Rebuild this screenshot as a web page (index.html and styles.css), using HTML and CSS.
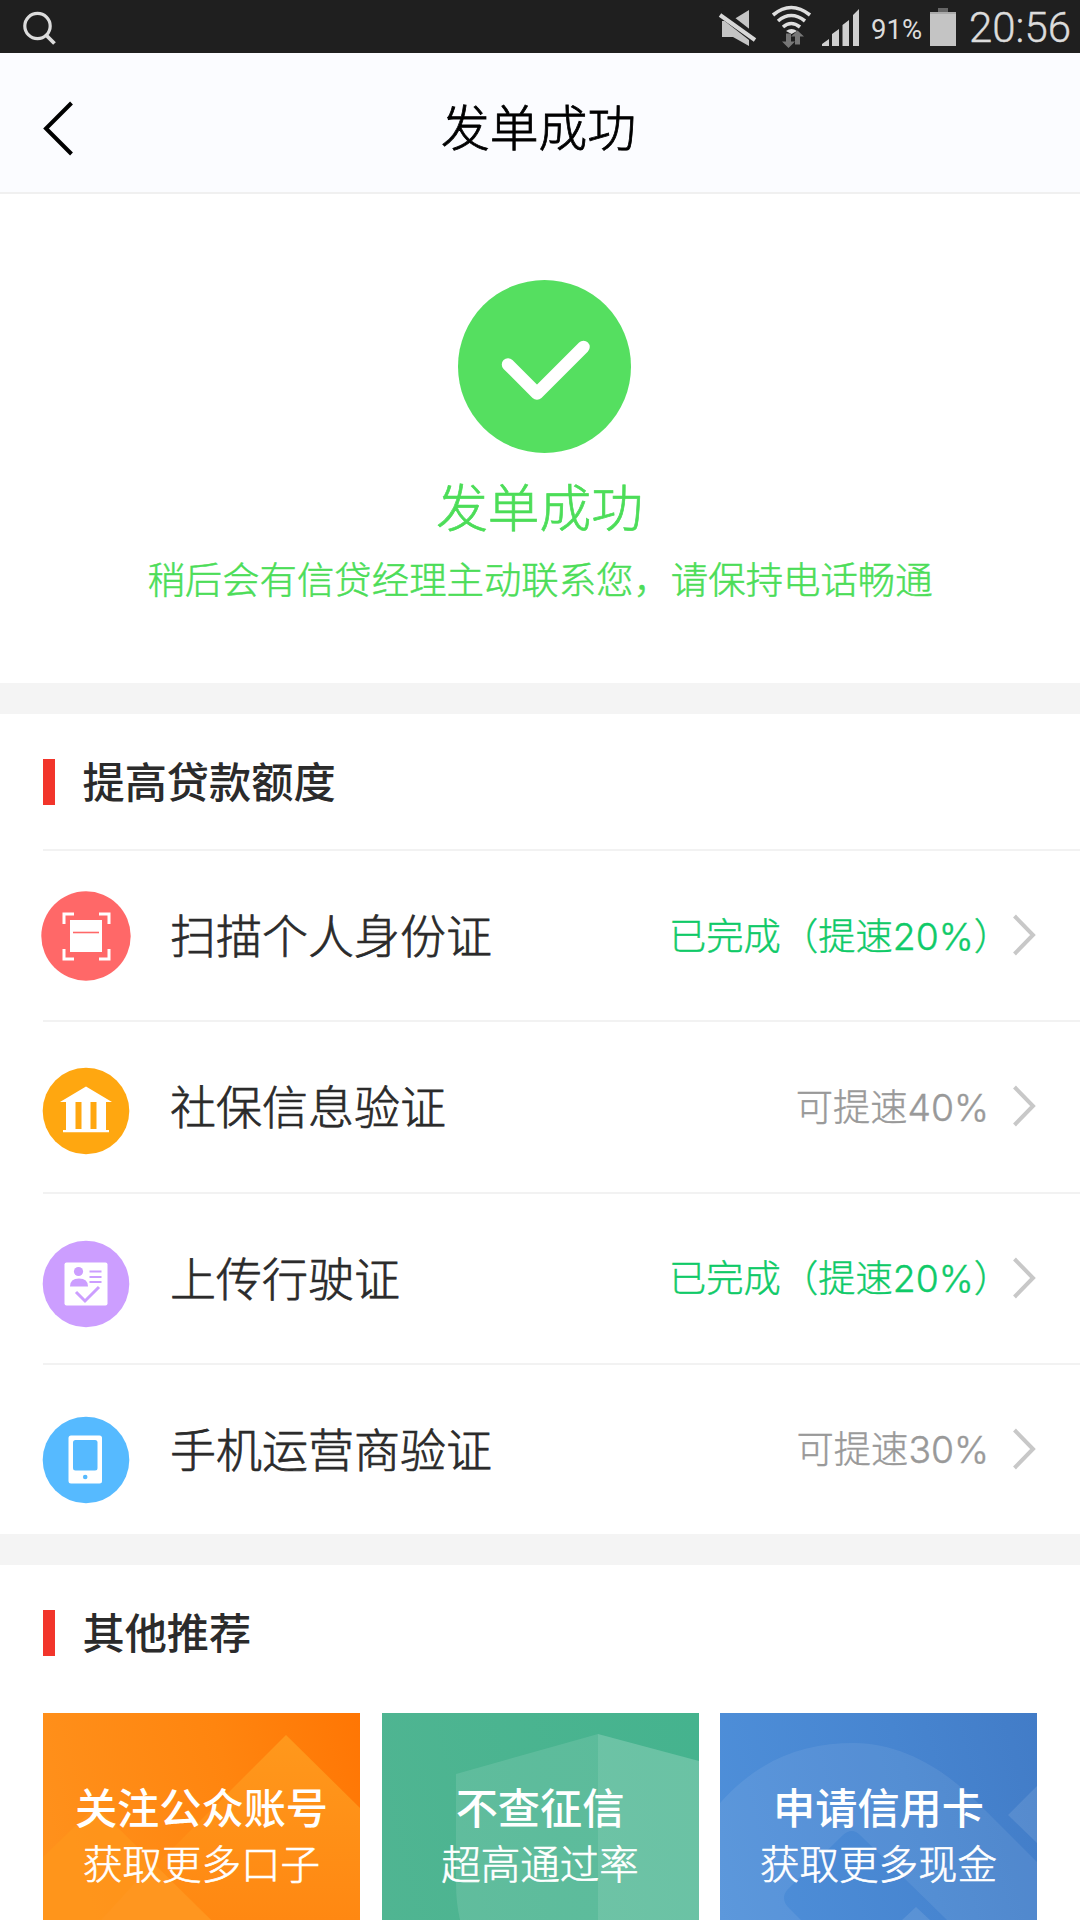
FILE: index.html
```html
<!DOCTYPE html>
<html lang="zh-CN">
<head>
<meta charset="utf-8">
<title>发单成功</title>
<link rel="stylesheet" href="styles.css">
</head>
<body>
<div class="screen">
  <div class="statusbar">
    <svg class="status-search" width="36" height="36" viewBox="0 0 36 36"><circle cx="17.500" cy="15" r="12.700" fill="none" stroke="#dcdcdc" stroke-width="3.200"/><path d="M26 24l8.500 8.500" stroke="#dcdcdc" stroke-width="3.800"/></svg>
    <svg class="status-icons" width="150" height="53" viewBox="0 0 150 53">
      <path d="M6 21h9L33 10v36L17 37H6z" fill="#c4c4c4"/>
      <path d="M3 11l36 28" stroke="#1f1f1f" stroke-width="9"/>
      <path d="M4 15l35 25" stroke="#d8d8d8" stroke-width="4"/>
      <g fill="none" stroke="#dedede" stroke-width="3.600"><path d="M57 15q18-15 37 0M62 21q13-11 27 0M67 27q8-7 17 0"/></g>
      <path d="M70 31q5.500-4 11 0l-5.500 3z" fill="#dedede"/>
      <path d="M70 33.500h5v8h4L72.500 48 66 41.500h4zM79 44.500v-8h-4l6.500-6 6.500 6h-4v8z" fill="#777"/>
      <path d="M106 46v-2l7-5v7zM116 46V34l7-5v17zM126.500 46V25l6.500-5v26zM137 46V15l6-6v37z" fill="#cfcfcf"/>
    </svg>
    <span class="percent">91%</span>
    <svg class="battery" width="26" height="38" viewBox="0 0 26 38"><path d="M8 0h10v4H8z" fill="#666"/><path d="M0 4h26v4H0z" fill="#aaa"/><path d="M0 6h26v32H0z" fill="#c4c4c4"/></svg>
    <span class="clock">20:56</span>
  </div>

  <header class="header">
    <svg class="back" width="34" height="56" viewBox="0 0 34 56"><path d="M29.500 2L4 27.500 29.500 53" fill="none" stroke="#000" stroke-width="4"/></svg>
    <h1>发单成功</h1>
  </header>

  <section class="result">
    <svg class="tick" width="173" height="173" viewBox="0 0 173 173"><circle cx="86.500" cy="86.500" r="86.500" fill="#55df60"/><path d="M50 84.500l29 29L125.500 67" fill="none" stroke="#fff" stroke-width="12.500" stroke-linecap="round" stroke-linejoin="round"/></svg>
    <h2>发单成功</h2>
    <p>稍后会有信贷经理主动联系您，请保持电话畅通</p>
  </section>

  <section class="panel">
    <h3><span>提高贷款额度</span></h3>
    <ul class="tasks">
      <li>
        <svg class="icon" viewBox="0 0 90 90"><circle cx="45" cy="45" r="44.700" fill="#ff6868"/><path d="M23 33v-10h10M58 23h10v10M68 58v10H58M33 68H23V58" fill="none" stroke="#fff" stroke-width="3"/><path d="M29 29h32v32H29z" fill="#fff"/><path d="M32 41.500h26" stroke="#ff6868" stroke-width="1.600"/></svg>
        <span class="name">扫描个人身份证</span><span class="state done">已完成（提速20%）</span>
        <svg class="arrow" width="24" height="42" viewBox="0 0 24 42"><path d="M2.500 2L21 21 2.500 40" fill="none" stroke="#c8c8c8" stroke-width="4"/></svg>
      </li>
      <li>
        <svg class="icon drop-4" viewBox="0 0 90 90"><circle cx="45" cy="45" r="43.300" fill="#ffa710"/><path d="M45 20.500L71 36h-6v28h3v2.200H22V64h3V36h-6z" fill="#fff"/><path d="M34.500 36h6v27h-6zM49.500 36h6v27h-6z" fill="#ffa710"/></svg>
        <span class="name">社保信息验证</span><span class="state">可提速40%</span>
        <svg class="arrow" width="24" height="42" viewBox="0 0 24 42"><path d="M2.500 2L21 21 2.500 40" fill="none" stroke="#c8c8c8" stroke-width="4"/></svg>
      </li>
      <li>
        <svg class="icon drop-5" viewBox="0 0 90 90"><circle cx="45" cy="45" r="43.300" fill="#cc9eff"/><rect x="23.500" y="23.500" width="43" height="43" rx="2" fill="#fff"/><g fill="#cc9eff"><circle cx="37.500" cy="32.500" r="4.600"/><path d="M29 47.500q0-8 9-8t9 8z"/></g><path d="M48.500 32.500h12M48.500 38h12M48.500 43h12" stroke="#cc9eff" stroke-width="2"/><path d="M35 53l9 9 14-14" fill="none" stroke="#cc9eff" stroke-width="3"/></svg>
        <span class="name">上传行驶证</span><span class="state done">已完成（提速20%）</span>
        <svg class="arrow" width="24" height="42" viewBox="0 0 24 42"><path d="M2.500 2L21 21 2.500 40" fill="none" stroke="#c8c8c8" stroke-width="4"/></svg>
      </li>
      <li>
        <svg class="icon drop-10" viewBox="0 0 90 90"><circle cx="45" cy="45" r="43.300" fill="#56baff"/><rect x="27.500" y="20.500" width="33.500" height="48" rx="2.500" fill="#fff"/><rect x="32" y="25" width="24.500" height="30.500" rx="2.500" fill="#56baff"/><circle cx="44.200" cy="62" r="2.300" fill="#56baff"/></svg>
        <span class="name">手机运营商验证</span><span class="state">可提速30%</span>
        <svg class="arrow" width="24" height="42" viewBox="0 0 24 42"><path d="M2.500 2L21 21 2.500 40" fill="none" stroke="#c8c8c8" stroke-width="4"/></svg>
      </li>
    </ul>
  </section>

  <section class="panel recommend">
    <h3><span>其他推荐</span></h3>
    <div class="cards">
      <div class="card orange">
        <svg class="art" viewBox="0 0 317 207"><defs><linearGradient id="o" x1="0" y1="0" x2="0" y2="1"><stop offset="0" stop-color="#ff981c"/><stop offset="1" stop-color="#ff8812"/></linearGradient></defs><path d="M243 22L317 95V207H58z" fill="url(#o)"/><path d="M0 144L53 93 168 207H0z" fill="#ff961c" opacity=".8"/><path d="M110 150L168 207H58z" fill="#ff961f"/></svg>
        <strong>关注公众账号</strong><span>获取更多口子</span>
      </div>
      <div class="card green">
        <svg class="art" viewBox="0 0 317 207"><path d="M74 61L216 21V207H78Q74 190 74 170z" fill="#fff" opacity=".11"/><path d="M216 21L317 48V207H216z" fill="#fff" opacity=".2"/></svg>
        <strong>不查征信</strong><span>超高通过率</span>
      </div>
      <div class="card blue">
        <svg class="art" viewBox="0 0 317 207"><path d="M0 90C40 45 85 30 134 30S225 58 253 85L317 149V207H227L140 122Q132 114 123 122L68 176Q60 185 68 194L81 207H0z" fill="#fff" opacity=".075"/><path d="M317 73L288 102 317 130zM182 207l14-13 14 13z" fill="#fff" opacity=".1"/></svg>
        <strong>申请信用卡</strong><span>获取更多现金</span>
      </div>
    </div>
  </section>
</div>
</body>
</html>
```
FILE: styles.css
```css
* { box-sizing: border-box; margin: 0; padding: 0; }
body { background: #fff; font-family: Inter, "Noto Sans CJK SC", sans-serif; font-weight: 300; color: #2b2b2b; }
svg { display: block; flex: none; }
.screen { width: 1080px; height: 1920px; overflow: hidden; display: flex; flex-direction: column; }
.statusbar { height: 53px; flex: none; background: #1f1f1f; display: flex; align-items: center; font-family: Roboto, sans-serif; color: #dcdcdc; padding: 0 8px 0 20px; }
.status-search { margin-top: 4px; }
.status-icons { margin-left: 660px; }
.percent { font-size: 27.500px; font-weight: 400; margin: 5px 0 0 5px; width: 51px; white-space: nowrap; }
.battery { margin: 1px 0 0 8px; }
.clock { font-size: 42px; font-weight: 300; margin: 2px 0 0 13px; white-space: nowrap; -webkit-text-stroke: .4px; }
.header { height: 141px; flex: none; background: #fbfcff; border-bottom: 2px solid #f0f0f0; display: grid; grid-template-columns: 77px 1fr 77px; align-items: center; }
.back { margin: 13px 0 0 42px; }
.header h1 { font-size: 48.800px; font-weight: 300; line-height: 70px; text-align: center; color: #000; margin-top: 12px; padding-right: 3px; -webkit-text-stroke: .8px; }
.result { height: 489px; flex: none; color: #4cdd58; display: flex; flex-direction: column; align-items: center; padding-top: 86px; }
.tick { margin-left: 9px; }
.result h2 { font-size: 51.700px; font-weight: 300; line-height: 70px; margin: 20px 1px 0 0; -webkit-text-stroke: .7px; }
.result p { font-size: 37.400px; line-height: 54px; margin-top: 11px; white-space: nowrap; -webkit-text-stroke: .5px; }
.panel { flex: none; border-top: 31px solid #f4f4f4; }
.panel h3 { height: 135px; margin-left: 43px; display: flex; align-items: center; gap: 27.500px; font-size: 42.200px; font-weight: 500; }
.panel h3 span { padding-bottom: 4px; }
.panel h3::before { content: ""; width: 12px; height: 46px; background: #f2352b; }
.tasks { list-style: none; margin-left: 43px; }
.tasks li { height: 171.250px; border-top: 2px solid #f2f2f2; display: flex; align-items: center; padding-right: 44px; }
.icon { width: 90px; height: 90px; margin-left: -2px; }
.drop-4 { margin-top: 8px; }
.drop-5 { margin-top: 12px; }
.drop-10 { margin-top: 22px; }
.name { font-size: 46px; margin-left: 39px; padding-bottom: 5px; flex: 1; white-space: nowrap; -webkit-text-stroke: .7px; }
.state { font-size: 37.300px; color: #999; margin-right: 23px; padding-bottom: 4px; white-space: nowrap; -webkit-text-stroke: .4px; }
.done { color: #0fca68; margin-right: 1px; }
.arrow { margin-bottom: 1px; }
.cards { display: flex; gap: 21.500px; margin: 13px 43px 0; }
.card { position: relative; width: 317px; height: 207px; color: #fff; display: flex; flex-direction: column; align-items: center; padding-top: 66px; overflow: hidden; }
.art { position: absolute; left: 0; top: 0; width: 317px; height: 207px; }
.card strong, .card span { position: relative; white-space: nowrap; }
.card strong { font-size: 42.200px; line-height: 60px; font-weight: 500; }
.card span { font-size: 39.500px; line-height: 52px; font-weight: 300; -webkit-text-stroke: .6px; }
.orange { background: linear-gradient(75deg, #ff921d, #ff850f 60%, #ff7604); }
.green { background: linear-gradient(75deg, #50b592, #45b38e); }
.blue { background: linear-gradient(75deg, #4f90da, #4785d0 60%, #427cc7); }
```
